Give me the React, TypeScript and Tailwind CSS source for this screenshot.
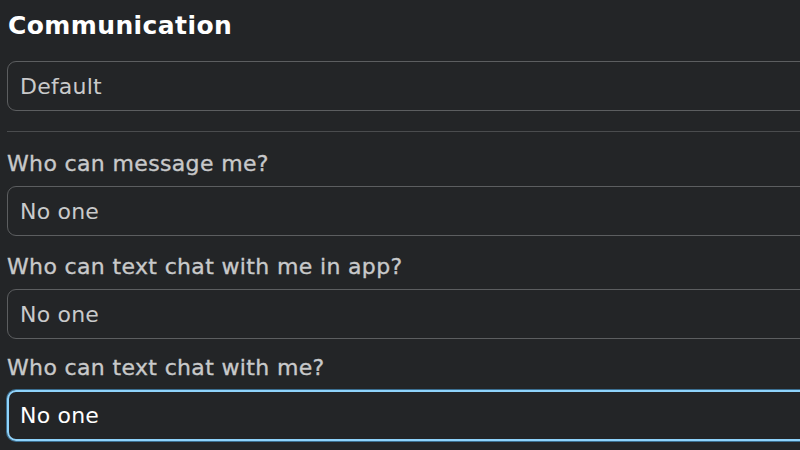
import type { ReactNode } from 'react'

function Field({ label, value, focused }: { label?: string; value: string; focused?: boolean }) {
  return (
    <div>
      {label && (
        <div className="text-[22px] text-[#c8c9ca] leading-[26px] h-[35px] tracking-[0.35px] [-webkit-text-stroke:0.35px_#c8c9ca]">{label}</div>
      )}
      <div
        className={
          focused
            ? 'h-[51px] rounded-[9px] border-2 border-[#8fd3fb] flex items-center px-[11px] text-[22px] text-white tracking-[0.2px] shadow-[0_0_0_1px_#3b6f91]'
            : 'h-[50px] rounded-[9px] border border-[#5c5e60] flex items-center px-[12px] text-[22px] text-[#c9cacb] tracking-[0.2px]'
        }
      >
        {value}
      </div>
    </div>
  )
}

function Section({ children }: { children: ReactNode }) {
  return <div className="flex flex-col">{children}</div>
}

export default function App() {
  return (
    <div className="w-[800px] h-[450px] overflow-hidden bg-[#232527]" style={{ fontFamily: '"DejaVu Sans", "Noto Sans", sans-serif' }}>
      <div className="w-[840px] pl-[7px] pt-[9px]">
        <h1 className="text-[25px] font-bold text-white leading-[34px] pl-[1px] tracking-[0.4px]">Communication</h1>
        <div className="mt-[18px]">
          <Field value="Default" />
        </div>
        <div className="mt-[20px] border-t border-[#4a4c4e]" />
        <Section>
          <div className="mt-[19px]">
            <Field label="Who can message me?" value="No one" />
          </div>
          <div className="mt-[18px]">
            <Field label="Who can text chat with me in app?" value="No one" />
          </div>
          <div className="mt-[16px]">
            <Field label="Who can text chat with me?" value="No one" focused />
          </div>
        </Section>
      </div>
    </div>
  )
}
